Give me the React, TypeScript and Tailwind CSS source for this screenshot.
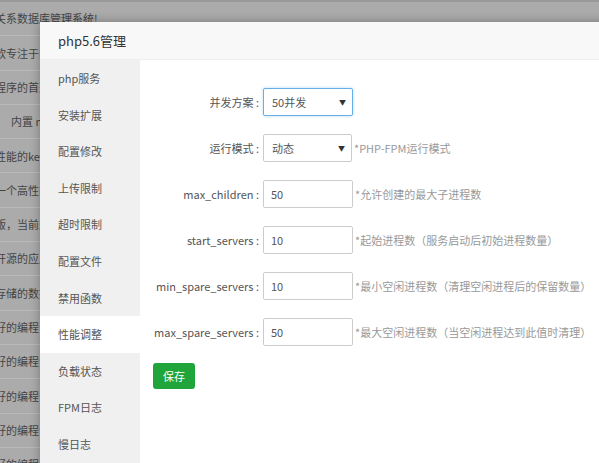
import type { ReactNode } from "react";

const BG_ROWS = [
  "关系数据库管理系统!",
  "软专注于能",
  "程序的首选",
  "　  内置 nginx",
  "性能的key",
  "一个高性能",
  "版，当前最",
  "开源的应用",
  "存储的数据",
  "好的编程语",
  "好的编程语",
  "好的编程语",
  "好的编程语",
  "好的编程语",
];

const MENU = [
  "php服务",
  "安装扩展",
  "配置修改",
  "上传限制",
  "超时限制",
  "配置文件",
  "禁用函数",
  "性能调整",
  "负载状态",
  "FPM日志",
  "慢日志",
];

const ACTIVE = "性能调整";

function Row({ label, children, hint }: { label: string; children: ReactNode; hint?: string }) {
  return (
    <div className="flex h-[28px] items-center">
      <span className="w-[106px] shrink-0 whitespace-nowrap text-right text-[11px] text-[#555]">
        {label} :
      </span>
      <div className="ml-[4px] shrink-0">{children}</div>
      {hint && <span className="ml-[2px] whitespace-nowrap text-[11px] text-[#999]">{hint}</span>}
    </div>
  );
}

function FakeSelect({ value, focused }: { value: string; focused?: boolean }) {
  return (
    <div
      className={
        focused
          ? "flex h-[28px] w-[90px] items-center justify-between rounded-[2px] border border-[#66afe9] bg-white pl-[8px] pr-[6px] text-[11px] text-[#555] shadow-[0_0_3px_rgba(102,175,233,0.5)]"
          : "flex h-[28px] w-[89px] items-center justify-between rounded-[2px] border border-[#ccc] bg-white pl-[8px] pr-[6px] text-[11px] text-[#555]"
      }
    >
      <span>{value}</span>
      <span className="text-[7px] text-[#333]">▼</span>
    </div>
  );
}

function TextBox({ value }: { value: string }) {
  return (
    <div className="flex h-[28px] w-[90px] items-center rounded-[2px] border border-[#ccc] bg-white pl-[7px] text-[11px] text-[#555]">
      {value}
    </div>
  );
}

export default function App() {
  return (
    <div className="relative h-[463px] w-[599px] overflow-hidden bg-[#ababab] font-['Noto_Sans_CJK_SC','Noto_Sans',sans-serif]">
      {/* page behind the shade */}
      <div className="mt-[-1px] border-t-[3px] border-[#999]">
        {BG_ROWS.map((t, i) => (
          <div
            key={i}
            className="flex h-[34.3px] items-center border-b border-[#bababa] text-[11px] whitespace-pre text-[#444]"
          >
            <span className="ml-[-5px]">{t}</span>
          </div>
        ))}
      </div>

      {/* modal */}
      <div className="absolute left-[40px] top-[22px] flex h-[460px] w-[600px] flex-col bg-white shadow-[0_0_10px_rgba(0,0,0,0.3)]">
        <div className="flex h-[38px] shrink-0 items-center border-b border-[#eee] bg-[#f8f8f8] pl-[18px] text-[13px] text-[#333]">
          php5.6管理
        </div>
        <div className="flex flex-1">
          <div className="w-[100px] shrink-0 bg-[#f0f0f0]">
            {MENU.map((m) => (
              <div
                key={m}
                className={
                  m === ACTIVE
                    ? "flex h-[36.6px] items-center bg-white pl-[18px] text-[11px] text-[#555]"
                    : "flex h-[36.6px] items-center pl-[18px] text-[11px] text-[#555]"
                }
              >
                {m}
              </div>
            ))}
          </div>
          <div className="flex flex-1 flex-col gap-[18px] pl-[13px] pt-[28px]">
            <Row label="并发方案">
              <FakeSelect value="50并发" focused />
            </Row>
            <Row label="运行模式" hint="*PHP-FPM运行模式">
              <FakeSelect value="动态" />
            </Row>
            <Row label="max_children" hint="*允许创建的最大子进程数">
              <TextBox value="50" />
            </Row>
            <Row label="start_servers" hint="*起始进程数（服务启动后初始进程数量）">
              <TextBox value="10" />
            </Row>
            <Row label="min_spare_servers" hint="*最小空闲进程数（清理空闲进程后的保留数量）">
              <TextBox value="10" />
            </Row>
            <Row label="max_spare_servers" hint="*最大空闲进程数（当空闲进程达到此值时清理）">
              <TextBox value="50" />
            </Row>
            <div className="mt-[-2px]">
              <button
                type="button"
                className="h-[26px] w-[42px] rounded-[3px] bg-[#20a53a] text-[11px] text-white"
              >
                保存
              </button>
            </div>
          </div>
        </div>
      </div>
    </div>
  );
}
